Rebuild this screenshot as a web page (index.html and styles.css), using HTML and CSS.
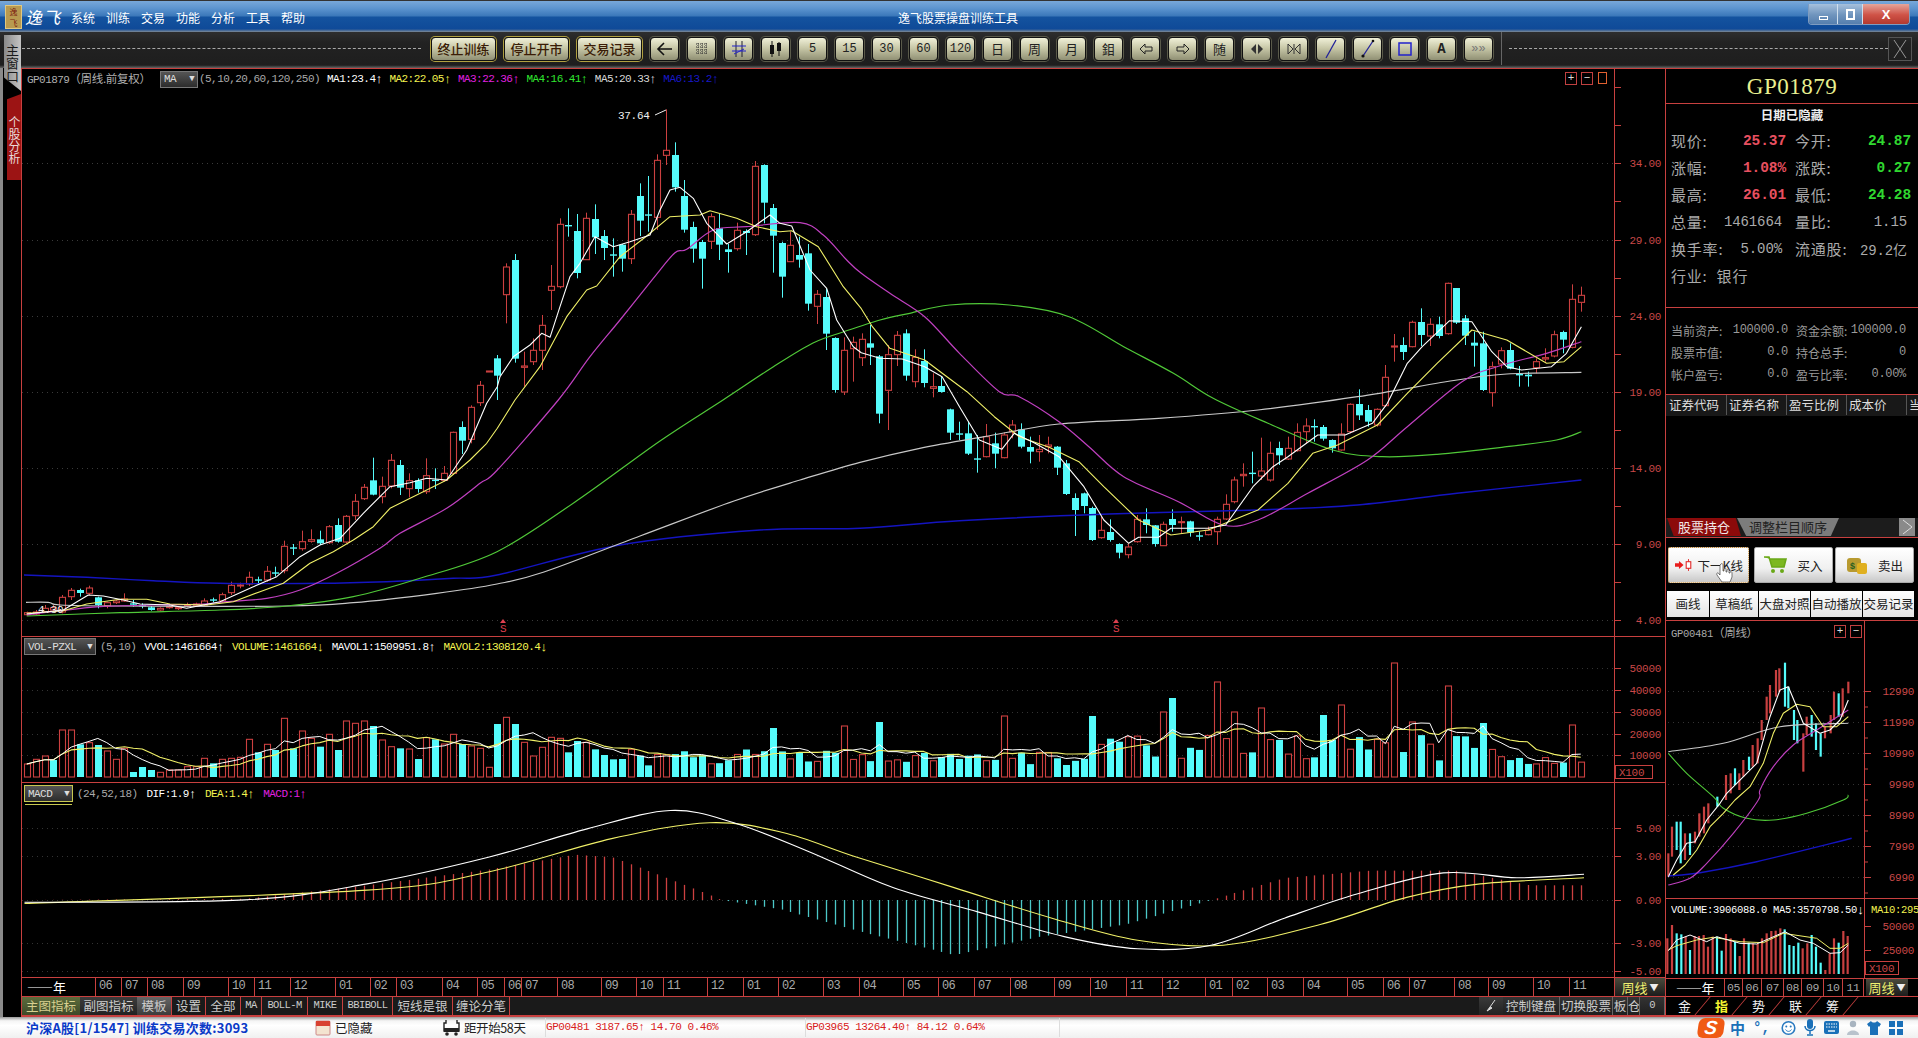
FILE: index.html
```html
<!DOCTYPE html>
<html lang="zh-CN">
<head>
<meta charset="utf-8">
<title>逸飞股票操盘训练工具</title>
<link rel="stylesheet" href="styles.css">
</head>
<body>
<div class="app">
  <header class="titlebar">
    <div class="brand">
      <span class="app-icon">逸飞</span>
      <span class="brand-name">逸飞</span>
    </div>
    <nav class="menu"><span>系统</span><span>训练</span><span>交易</span><span>功能</span><span>分析</span><span>工具</span><span>帮助</span></nav>
    <div class="app-title">逸飞股票操盘训练工具</div>
    <div class="win-btns">
      <span class="win-btn win-b1"><i class="win-min"></i></span>
      <span class="win-btn win-b2"><i class="win-max"></i></span>
      <span class="win-btn win-close">X</span>
    </div>
  </header>

  <div class="toolbar">
    <div class="grip grip-left"></div>
    <div class="tools-left">
      <button class="tb-text">终止训练</button>
      <button class="tb-text">停止开市</button>
      <button class="tb-text">交易记录</button>
    </div>
    <div class="tools-right">
      <button class="tb"><svg width="18" height="14" viewBox="0 0 18 14"><path d="M16 7H3M8 1 2 7l6 6" fill="none" stroke="#111" stroke-width="1.6"/></svg></button>
      <button class="tb"><svg width="14" height="14" viewBox="0 0 14 14"><path d="M1 2h12M1 5h12M1 8h12M1 11h12M3 1v12M7 1v12M11 1v12" fill="none" stroke="#333" stroke-dasharray="1 1"/></svg></button>
      <button class="tb"><svg width="16" height="18" viewBox="0 0 16 18"><path d="M5 1v16M11 1v16" stroke="#223" fill="none"/><path d="M1 6h14M1 11h14" stroke="#22c" fill="none"/><path d="M3 14 13 9" stroke="#22c" fill="none"/></svg></button>
      <button class="tb"><svg width="14" height="18" viewBox="0 0 14 18"><path d="M3 1v16M10 2v14" stroke="#111"/><rect x="1" y="5" width="4" height="9" fill="#111"/><rect x="8" y="3" width="4" height="8" fill="#111"/></svg></button>
      <button class="tb">5</button>
      <button class="tb">15</button>
      <button class="tb">30</button>
      <button class="tb">60</button>
      <button class="tb">120</button>
      <button class="tb tb-cn">日</button>
      <button class="tb tb-cn">周</button>
      <button class="tb tb-cn">月</button>
      <button class="tb tb-cn">鉬</button>
      <button class="tb"><svg width="14" height="12" viewBox="0 0 14 12"><path d="M6 1 1 6l5 5V8h7V4H6z" fill="none" stroke="#222"/></svg></button>
      <button class="tb"><svg width="14" height="12" viewBox="0 0 14 12"><path d="M8 1l5 5-5 5V8H1V4h7z" fill="none" stroke="#222"/></svg></button>
      <button class="tb tb-cn">随</button>
      <button class="tb"><svg width="14" height="12" viewBox="0 0 14 12"><path d="M6 1 1 6l5 5zM8 1l5 5-5 5z" fill="#333"/></svg></button>
      <button class="tb"><svg width="14" height="12" viewBox="0 0 14 12"><path d="M1 1l5 5-5 5zM13 1 8 6l5 5zM7 1v10" fill="none" stroke="#333"/></svg></button>
      <button class="tb"><svg width="16" height="20" viewBox="0 0 16 20"><path d="M13 1 3 19" stroke="#229" stroke-width="1.3"/></svg></button>
      <button class="tb"><svg width="16" height="20" viewBox="0 0 16 20"><path d="M13 2 3 17" stroke="#229" stroke-width="1.3"/><circle cx="3" cy="17" r="1.6" fill="#111"/><circle cx="13" cy="2" r="1.3" fill="#111"/></svg></button>
      <button class="tb"><svg width="16" height="16" viewBox="0 0 16 16"><rect x="2" y="2" width="12" height="12" fill="none" stroke="#22c" stroke-width="1.5"/></svg></button>
      <button class="tb tb-bold">A</button>
      <button class="tb tb-more">»»</button>
    </div>
    <div class="grip grip-right"></div>
    <div class="toolbar-close"><svg width="22" height="22" viewBox="0 0 22 22"><path d="M5 2l12 18M17 2 5 20" stroke="#999" fill="none"/></svg></div>
  </div>

  <div class="workspace">
    <aside class="leftstrip">
      <div class="tab-main">主窗口</div>
      <div class="tab-stock">个股分析</div>
    </aside>

    <main class="charts">
      <section class="pane pane-main">
        <svg id="chart-main" class="pane-svg" width="1644" height="568" viewBox="21 68 1644 568"></svg>
        <div class="legend legend-main">
          <span class="lg-name">GP01879<span class="cn">（周线.前复权）</span></span>
          <span class="dropdown dd-ma">MA<i>▼</i></span>
          <span class="lg-dim">(5,10,20,60,120,250)</span>
          <span class="c-white">MA1:23.4<i class="ar">↑</i></span>
          <span class="c-yellow">MA2:22.05<i class="ar">↑</i></span>
          <span class="c-magenta">MA3:22.36<i class="ar">↑</i></span>
          <span class="c-green">MA4:16.41<i class="ar">↑</i></span>
          <span class="c-grey">MA5:20.33<i class="ar">↑</i></span>
          <span class="c-blue">MA6:13.2<i class="ar">↑</i></span>
        </div>
        <div class="pane-ctrl"><b>+</b><b>−</b><b class="ctrl-win"></b></div>
      </section>
      <section class="pane pane-vol">
        <svg id="chart-vol" class="pane-svg" width="1644" height="146" viewBox="21 636 1644 146"></svg>
        <div class="legend legend-vol">
          <span class="dropdown dd-vol">VOL-PZXL<i>▼</i></span>
          <span class="lg-dim">(5,10)</span>
          <span class="c-white">VVOL:1461664<i class="ar">↑</i></span>
          <span class="c-yellow">VOLUME:1461664<i class="ar">↓</i></span>
          <span class="c-white">MAVOL1:1509951.8<i class="ar">↑</i></span>
          <span class="c-yellow">MAVOL2:1308120.4<i class="ar">↓</i></span>
        </div>
      </section>
      <section class="pane pane-macd">
        <svg id="chart-macd" class="pane-svg" width="1644" height="195" viewBox="21 782 1644 195"></svg>
        <div class="legend legend-macd">
          <span class="dropdown dd-macd">MACD<i>▼</i></span>
          <span class="lg-dim">(24,52,18)</span>
          <span class="c-white">DIF:1.9<i class="ar">↑</i></span>
          <span class="c-yellow">DEA:1.4<i class="ar">↑</i></span>
          <span class="c-magenta">MACD:1<i class="ar">↑</i></span>
        </div>
      </section>
      <div class="timeaxis">
        <div id="time-cells" class="time-cells"></div>
        <div class="period-btn">周线<i>▼</i></div>
      </div>
      <div class="bottomtabs">
        <span class="bt bt-active" style="width:58px">主图指标</span>
        <span class="bt bt-sub" style="width:57px">副图指标</span>
        <span class="bt bt-tpl" style="width:35px">模板</span>
        <span class="bt" style="width:34px">设置</span>
        <span class="bt" style="width:35px">全部</span>
        <span class="bt bt-en" style="width:21px">MA</span>
        <span class="bt bt-en" style="width:46px">BOLL-M</span>
        <span class="bt bt-en" style="width:35px">MIKE</span>
        <span class="bt bt-en" style="width:50px">BBIBOLL</span>
        <span class="bt" style="width:60px">短线是银</span>
        <span class="bt" style="width:57px">缠论分笔</span>
        <span class="bt-fill"></span>
        <span class="bt bt-pin"><svg width="14" height="14" viewBox="0 0 14 14"><path d="M11 1 6 8M3 12l3-4 2 1z" stroke="#ddd" fill="#ddd"/></svg></span>
        <span class="bt bt-plain" style="width:57px">控制键盘</span>
        <span class="bt bt-plain" style="width:53px">切换股票</span>
        <span class="bt bt-plain" style="width:15px">板</span>
        <span class="bt bt-plain" style="width:12px">仓</span>
        <span class="bt bt-plain bt-en" style="width:25px">0</span>
      </div>
    </main>

    <aside class="side">
      <div class="code">GP01879</div>
      <div class="quote">
        <div class="date-hidden">日期已隐藏</div>
        <div class="quote-grid">
          <div class="q"><span>现价:</span><b class="up">25.37</b></div>
          <div class="q"><span>今开:</span><b class="down">24.87</b></div>
          <div class="q"><span>涨幅:</span><b class="up">1.08%</b></div>
          <div class="q"><span>涨跌:</span><b class="down">0.27</b></div>
          <div class="q"><span>最高:</span><b class="up">26.01</b></div>
          <div class="q"><span>最低:</span><b class="down">24.28</b></div>
          <div class="q"><span>总量:</span><em>1461664</em></div>
          <div class="q"><span>量比:</span><em>1.15</em></div>
          <div class="q"><span>换手率:</span><em>5.00%</em></div>
          <div class="q"><span>流通股:</span><em>29.2亿</em></div>
          <div class="q q-start"><span>行业:</span><span>银行</span></div>
        </div>
      </div>
      <div class="account">
        <div class="a"><span>当前资产:</span><em>100000.0</em></div>
        <div class="a"><span>资金余额:</span><em>100000.0</em></div>
        <div class="a"><span>股票市值:</span><em>0.0</em></div>
        <div class="a"><span>持仓总手:</span><em>0</em></div>
        <div class="a"><span>帐户盈亏:</span><em>0.0</em></div>
        <div class="a"><span>盈亏比率:</span><em>0.00%</em></div>
      </div>
      <div class="table-head">
        <span>证券代码</span><span>证券名称</span><span>盈亏比例</span><span>成本价</span><span class="th-cut">当</span>
      </div>
      <div class="table-blank"></div>
      <div class="hold-tabs">
        <span class="ht ht-on">股票持仓</span>
        <span class="ht ht-off">调整栏目顺序</span>
        <span class="ht-fill"></span>
        <span class="ht-next"><svg width="15" height="16" viewBox="0 0 15 16"><path d="M3 1l9 7-9 7" fill="none" stroke="#ddd"/></svg></span>
      </div>
      <div class="actions">
        <button class="act act-next">
          <svg width="28" height="18" viewBox="0 0 28 18"><path d="M0 6.5h6V3l7 6-7 6v-3.5H0z" fill="#e81c1c"/><rect x="17" y="4" width="7" height="10" fill="#fff" stroke="#e02020" stroke-width="1.6"/><path d="M20.5 0v4M20.5 14v4" stroke="#e02020" stroke-width="1.4"/></svg>
          <span>下一K线</span>
          <svg class="hand" width="17" height="20" viewBox="0 0 17 20"><path d="M5 1c1-1 2 0 2 1v6h1V6c1-1 2-1 2 0v3h1V7c1-1 2-1 2 0v3h1V9c1-1 2 0 2 1v4l-2 5H6L1 12c-1-2 1-3 2-1l1 1V2z" fill="#fff" stroke="#444" stroke-width=".7"/></svg>
        </button>
        <button class="act act-gap">
          <svg width="24" height="18" viewBox="0 0 24 18"><path d="M0 1h5l3 10h12l2-8H6" fill="#7cb820" stroke="#6aa818" stroke-width="1.6"/><circle cx="9" cy="15" r="2" fill="#6aa818"/><circle cx="18" cy="15" r="2" fill="#6aa818"/></svg>
          <span>买入</span>
        </button>
        <button class="act">
          <svg width="22" height="20" viewBox="0 0 22 20"><rect x="1" y="3" width="14" height="14" rx="3" fill="#b89a30"/><rect x="11" y="8" width="10" height="11" rx="2" fill="#e0b020"/><text x="4" y="14" class="bag-s">$</text></svg>
          <span>卖出</span>
        </button>
      </div>
      <div class="tool-row">
        <span style="width:42px">画线</span>
        <span style="width:48px">草稿纸</span>
        <span style="width:51px">大盘对照</span>
        <span style="width:51px">自动播放</span>
        <span style="width:51px">交易记录</span>
      </div>
      <div class="mini">
        <svg id="chart-mini" class="pane-svg" width="252" height="357" viewBox="1666 621 252 357"></svg>
        <div class="mini-title">GP00481<span class="cn">（周线）</span></div>
        <div class="mini-ctrl"><b>+</b><b>−</b></div>
        <div class="mini-legend"><span class="c-white">VOLUME:3906088.0 MA5:3570798.50<i class="ar">↓</i></span><span class="c-yellow mini-ma10">MA10:295</span></div>
      </div>
      <div class="mini-time">
        <span class="mini-year" style="width:59px">——年</span>
        <span style="width:18px">05</span><span style="width:19px">06</span><span style="width:22px">07</span><span style="width:18px">08</span><span style="width:22px">09</span><span style="width:19px">10</span><span style="width:21px">11</span>
        <div class="period-btn mini-period">周线<i>▼</i></div>
      </div>
      <div class="mini-tabs">
        <span>金</span><span class="mt-on">指</span><span>势</span><span>联</span><span>筹</span>
      </div>
    </aside>
  </div>

  <footer class="statusbar">
    <div class="st-market">沪深A股[1/1547] 训练交易次数:3093</div>
    <div class="st-item st-date">
      <svg width="16" height="17" viewBox="0 0 16 17"><rect x="1" y="2" width="14" height="14" rx="1" fill="#f4e4d0" stroke="#c88"/><rect x="1" y="2" width="14" height="5" fill="#d84030"/></svg>
      <span>已隐藏</span>
    </div>
    <div class="st-item st-bus">
      <svg width="17" height="17" viewBox="0 0 17 17"><path d="M3 1v3H1v8h15V4h-2V1" fill="none" stroke="#222" stroke-width="1.4"/><rect x="1" y="9" width="15" height="4" fill="#222"/><circle cx="4" cy="15" r="1.8" fill="#222"/><circle cx="13" cy="15" r="1.8" fill="#222"/></svg>
      <span>距开始58天</span>
    </div>
    <div class="st-idx st-idx1">GP00481 3187.65↑ 14.70 0.46%</div>
    <div class="st-idx st-idx2">GP03965 13264.40↑ 84.12 0.64%</div>
    <div class="st-fill"></div>
    <div class="ime">
      <span class="ime-s">S</span>
      <span class="ime-zh">中</span>
      <span class="ime-p">°,</span>
      <svg width="15" height="16" viewBox="0 0 15 16"><circle cx="7.5" cy="8" r="6.3" fill="#fff" stroke="#2a7ac0" stroke-width="1.6"/><circle cx="5.3" cy="6.5" r="1" fill="#2a7ac0"/><circle cx="9.7" cy="6.5" r="1" fill="#2a7ac0"/><path d="M4.5 9.5c1.5 2.5 4.5 2.5 6 0" fill="none" stroke="#2a7ac0"/></svg>
      <svg width="12" height="17" viewBox="0 0 12 17"><rect x="3" y="0" width="6" height="10" rx="3" fill="#1a70b8"/><path d="M1 7c0 6 10 6 10 0M6 12v3M3 16h6" fill="none" stroke="#1a70b8" stroke-width="1.5"/></svg>
      <svg width="15" height="13" viewBox="0 0 15 13"><rect x="0" y="0" width="15" height="13" rx="2" fill="#1a70b8"/><path d="M2 3h11M2 6h11" stroke="#fff" stroke-dasharray="1.5 1"/><path d="M4 10h7" stroke="#fff" stroke-width="1.4"/></svg>
      <svg width="12" height="16" viewBox="0 0 12 16"><circle cx="6" cy="4" r="3.2" fill="#a8b4c0"/><path d="M0 15c0-6 12-6 12 0z" fill="#b8c2cc"/></svg>
      <svg width="14" height="14" viewBox="0 0 14 14"><path d="M4 0 0 3l2 3 1-1v9h8V5l1 1 2-3-4-3c-1 2-5 2-6 0z" fill="#1a70b8"/></svg>
      <svg width="14" height="14" viewBox="0 0 14 14"><rect width="6" height="6" fill="#1a70b8"/><rect x="8" width="6" height="6" fill="#1a70b8"/><rect y="8" width="6" height="6" fill="#1a70b8"/><rect x="8" y="8" width="6" height="6" fill="#1a70b8"/></svg>
    </div>
  </footer>
</div>
<script src="chart.js"></script>
</body>
</html>
```
FILE: styles.css
```css
* { box-sizing: border-box; }
html, body { margin: 0; padding: 0; background: #000; }
body {
  width: 1918px; height: 1038px; overflow: hidden;
  font-family: "Noto Sans CJK SC", "Liberation Sans", sans-serif;
  font-size: 12px; color: #bbb;
}
.app { width: 1918px; height: 1038px; display: flex; flex-direction: column; background: #000; }
button { font-family: inherit; padding: 0; cursor: default; }
em { font-style: normal; }

/* title bar */
.titlebar {
  height: 32px; flex: none; display: flex; align-items: center; padding: 3px 8px 2px 5px;
  border-top: 1px solid #333;
  background: linear-gradient(#78a8da 0, #5c94cf 24%, #3b78ba 48%, #14539f 52%, #0f4a98 90%, #7f8a96 100%);
  color: #fff; position: relative;
}
.brand { width: 66px; display: flex; align-items: center; gap: 3px; flex: none; }
.app-icon {
  width: 17px; height: 24px; background: #b89a50; color: #7a1a10; font-size: 8px; line-height: 11px;
  text-align: center; border: 1px solid #e0c880; overflow: hidden;
}
.brand-name { font-family: "Noto Sans CJK JP", sans-serif; font-size: 17px; font-style: italic; line-height: 24px; letter-spacing: 1px; }
.menu { display: flex; gap: 11px; font-size: 12px; }
.menu span { width: 24px; text-align: center; }
.app-title { position: absolute; left: 898px; top: 8px; font-size: 12px; line-height: 17px; }
.win-btns { margin-left: auto; display: flex; height: 21px; border-radius: 0 0 4px 4px; overflow: hidden; margin-top: -5px; border: 1px solid #7f9cc0; border-top: 0; }
.win-btn {
  display: flex; align-items: center; justify-content: center;
  background: linear-gradient(#a6c0dc, #6f94bd 55%, #567fae); border-left: 1px solid #cfdfee;
}
.win-b1 { width: 28px; border-left: 0; }
.win-b2 { width: 25px; }
.win-close { width: 47px; background: linear-gradient(#e6a59a, #cf5246 55%, #b33a30); color: #fff; font-family: "Liberation Sans", sans-serif; font-weight: bold; font-size: 13px; }
.win-min { width: 9px; height: 4px; border: 1px solid #fff; margin-top: 7px; }
.win-max { width: 9px; height: 11px; border: 2px solid #fff; }

/* toolbar */
.toolbar {
  height: 36px; flex: none; display: flex; align-items: center;
  background: linear-gradient(#2e2e2e, #222 30%, #1e1e1e 92%, #666 100%);
  padding-left: 22px; padding-bottom: 3px;
}
.grip { height: 1px; border-top: 1px dashed #a8a8a8; align-self: center; }
.grip-left { width: 399px; margin-right: 10px; }
.grip-right { width: 379px; margin-left: 7px; }
.tools-left { display: flex; gap: 8px; }
.tools-right { display: flex; gap: 8px; margin-left: 8px; border-right: 1px solid #666; padding-right: 8px; height: 33px; align-items: center; }
.tb, .tb-text {
  height: 24px; border: 1px solid #111; border-radius: 4px; color: #222; display: flex; align-items: center; justify-content: center;
  background: linear-gradient(#f0f0d8, #c8c8a8 45%, #909074);
  box-shadow: 0 0 0 1px #5a5a4a; font-size: 13px;
}
.tb { width: 29px; font-family: "Liberation Mono", monospace; font-size: 12px; }
.tb-text { width: 65px; color: #3a1c06; font-size: 13px; font-weight: 500; box-shadow: 0 0 0 1px #b0a040; }
.tb-cn { font-family: "Noto Sans CJK SC", sans-serif; font-size: 13px; }
.tb-bold { font-weight: bold; font-size: 14px; }
.tb-more { color: #777; font-size: 12px; }
.toolbar-close { width: 24px; height: 24px; border: 1px solid #555; }

/* work area */
.workspace { height: 949px; flex: none; display: flex; }
.leftstrip { width: 21px; flex: none; background: #000; border-left: 3px solid #8a8a8a; position: relative; }
.tab-main {
  position: absolute; left: 1px; top: -33px; width: 17px; height: 56px; background: linear-gradient(90deg, #8a8a8a, #c4c4c4);
  color: #1a1a1a; writing-mode: vertical-rl; text-orientation: upright; font-size: 13px; line-height: 17px; text-align: center;
  clip-path: polygon(0 0, 100% 0, 100% 100%, 0 76%);
}
.tab-stock {
  position: absolute; left: 4px; top: 26px; width: 14px; height: 86px; background: #9c1414; color: #e8d8d8;
  writing-mode: vertical-rl; text-orientation: upright; font-size: 12px; line-height: 14px; text-align: center; padding-top: 5px;
  clip-path: polygon(0 6%, 100% 0, 100% 100%, 0 100%);
}
.charts { width: 1644px; flex: none; display: flex; flex-direction: column; }
.pane { position: relative; flex: none; }
.pane-main { height: 568px; }
.pane-vol { height: 146px; }
.pane-macd { height: 195px; }
.pane-svg { display: block; }
.legend {
  position: absolute; left: 6px; display: flex; align-items: center; gap: 7px;
  font-family: "Liberation Mono", "Noto Sans CJK SC", monospace; font-size: 11px; letter-spacing: -.55px; line-height: 16px; white-space: nowrap;
}
.legend-main { top: 2px; }
.legend-vol { top: 2px; left: 3px; gap: 8px; }
.legend-macd { top: 3px; left: 3px; gap: 9px; }
.lg-name { color: #b0b0b0; width: 126px; }
.cn { font-family: "Noto Sans CJK SC", sans-serif; font-size: 11.5px; letter-spacing: -.3px; }
.lg-dim { color: #aaa; }
.ar { display: inline-block; width: 7px; font: 13px/14px "Liberation Sans", sans-serif; letter-spacing: 0; text-align: center; vertical-align: -1px; }
.c-white { color: #fff; }
.c-yellow { color: #f4f450; }
.c-magenta { color: #e020e0; }
.c-green { color: #30e830; }
.c-grey { color: #d8d8d8; }
.c-blue { color: #1818c8; }
.dropdown {
  display: flex; align-items: center; justify-content: space-between; height: 17px; padding: 0 3px;
  background: linear-gradient(#555, #2c2c2c); border: 1px solid #777; color: #ddd;
}
.dropdown i { font-style: normal; font-size: 9px; }
.dd-ma { width: 38px; margin-right: -6px; }
.dd-vol { width: 72px; margin-right: -4px; }
.dd-macd { width: 49px; border-color: #c8c850; box-shadow: 0 3px 0 -1px #000, 0 4px 0 -1px #c8c850; margin-right: -5px; }
.pane-ctrl { position: absolute; top: 4px; left: 1544px; display: flex; gap: 4px; }
.pane-ctrl b, .mini-ctrl b {
  width: 12px; height: 13px; border: 1px solid #c04040; color: #ddd; font: 11px/11px "Liberation Mono", monospace; text-align: center;
}
.ctrl-win { width: 9px !important; height: 12px !important; border-color: #e06030 !important; margin-left: 1px; }

.timeaxis { height: 20px; flex: none; display: flex; border-top: 1px solid #c8403f; border-bottom: 1px solid #c8403f; border-left: 1px solid #c8403f; }
.time-cells { width: 1592px; display: flex; overflow: hidden; }
.time-cell {
  flex: none; border-left: 1px solid #c8403f; padding-left: 3px; color: #aaa;
  font-family: "Liberation Mono", monospace; font-size: 12px; letter-spacing: -.6px; line-height: 17px; white-space: nowrap;
}
.time-year { border-left: 0; padding-left: 5px; color: #fff; font-family: "Noto Sans CJK SC", sans-serif; font-size: 13px; letter-spacing: 0; }
.period-btn {
  width: 51px; height: 18px; display: flex; align-items: center; justify-content: center; gap: 2px; color: #f0f070; font-size: 13px; line-height: 17px;
  background: linear-gradient(#4a4a3c, #1c1c1c); border-left: 1px solid #c8403f; white-space: nowrap;
}
.period-btn i { font-style: normal; font-size: 9px; color: #eee; }

.bottomtabs { height: 20px; flex: none; display: flex; border-left: 1px solid #c8403f; border-bottom: 2px solid #c8403f; background: #1a1a1a; }
.bt {
  flex: none; border-right: 1px solid #c8403f; text-align: center; color: #ccc; font-size: 12.5px; line-height: 17px; letter-spacing: 0; white-space: nowrap; overflow: hidden;
}
.bt-en { font-family: "Liberation Mono", monospace; font-size: 10.5px; letter-spacing: -.6px; }
.bt-active { background: linear-gradient(#5c6c3c, #3e4a28); border-right: 0; color: #d8d090; }
.bt-sub { background: linear-gradient(#3c3c3c, #222); border-right: 0; }
.bt-tpl { background: linear-gradient(#666, #3c3c3c); }
.bt-fill { flex: 1; }
.bt-pin { width: 24px; background: linear-gradient(#3a3a3a, #222); border-right: 0; display: flex; align-items: center; justify-content: center; }
.bt-plain { background: linear-gradient(#333, #1f1f1f); border-right: 1px solid #666; }

/* side panel */
.side { width: 253px; flex: none; display: flex; flex-direction: column; border-left: 1px solid #c8403f; background: #000; }
.code { height: 36px; flex: none; border-top: 1px solid #c8403f; border-bottom: 1px solid #c8403f; text-align: center; color: #e8f090; font: 23px/35px "Liberation Serif", serif; letter-spacing: .5px; }
.quote { height: 204px; flex: none; border-bottom: 1px solid #c8403f; padding-left: 5px; }
.date-hidden { height: 23px; line-height: 22px; text-align: center; color: #eee; font-weight: 700; font-size: 12.5px; padding-right: 5px; }
.quote-grid { display: grid; grid-template-columns: 115px 116px; column-gap: 9px; grid-auto-rows: 27px; }
.q { display: flex; justify-content: space-between; align-items: center; font-size: 15px; letter-spacing: .8px; color: #aaa; white-space: nowrap; }
.q b, .q em { font-family: "Liberation Mono", monospace; font-size: 14.5px; letter-spacing: -.1px; }
.q em { color: #aaa; font-size: 14px; letter-spacing: -.1px; margin-right: 4px; }
.q-start { justify-content: flex-start; gap: 9px; }
.up { color: #e85060; }
.down { color: #30d830; }
.account { height: 87px; flex: none; border-bottom: 1px solid #c8403f; padding: 11px 8px 0 5px; display: grid; grid-template-columns: 117px 110px; column-gap: 8px; grid-auto-rows: 22px; }
.a { display: flex; justify-content: space-between; align-items: center; font-size: 12px; color: #9a9a9a; white-space: nowrap; }
.a em { font-family: "Liberation Mono", monospace; font-size: 12px; letter-spacing: -.3px; }
.table-head { height: 21px; flex: none; display: flex; background: #181818; color: #ddd; font-size: 12.5px; line-height: 20px; white-space: nowrap; overflow: hidden; padding-left: 1px; }
.table-head span { width: 60px; flex: none; padding-left: 2px; border-right: 1px solid #555; height: 20px; }
.table-head .th-cut { border: 0; }
.table-blank { height: 102px; flex: none; }
.hold-tabs { height: 20px; flex: none; display: flex; border-bottom: 1px solid #c8403f; background: #1c1c1c; padding-left: 1px; }
.ht { flex: none; height: 18px; line-height: 18px; text-align: center; font-size: 13px; white-space: nowrap; }
.ht-on { width: 74px; background: #8c0a0a; color: #f0e8e8; clip-path: polygon(0 0, 93% 0, 100% 100%, 9% 100%); }
.ht-off { width: 102px; margin-left: -4px; background: #7c7c7c; color: #222; clip-path: polygon(0 0, 100% 0, 92% 100%, 9% 100%); }
.ht-fill { flex: 1; }
.ht-next { width: 16px; height: 18px; background: #8a8a8a; margin-right: 3px; display: flex; align-items: center; justify-content: center; }
.actions { height: 53px; flex: none; padding: 9px 0 0 2px; display: flex; gap: 2px; }
.act {
  width: 79px; height: 36px; display: flex; align-items: center; justify-content: space-around; padding: 0 5px;
  background: linear-gradient(#fff, #f0f0f0 60%, #c8c8c8); border: 1px solid #aaa; border-radius: 2px; color: #222; font-size: 12.5px; position: relative; white-space: nowrap;
}
.act-next { width: 81px; border: 1px dotted #c88a30; margin-right: 3px; justify-content: flex-start; gap: 4px; padding-left: 6px; }
.act-gap { margin-right: 0; }
.hand { position: absolute; left: 47px; top: 15px; }
.bag-s { font: bold 9px "Liberation Sans", sans-serif; fill: #286020; }
.tool-row { height: 30px; flex: none; display: flex; gap: 1px; padding-left: 1px; border-bottom: 1px solid #c8403f; }
.tool-row span { height: 26px; flex: none; background: linear-gradient(#fff, #e4e4e4); color: #222; text-align: center; line-height: 25px; font-size: 12.5px; white-space: nowrap; overflow: hidden; }
.mini { height: 357px; flex: none; position: relative; }
.mini-title { position: absolute; left: 5px; top: 3px; color: #aaa; font: 10.5px/16px "Liberation Mono", monospace; letter-spacing: -.3px; }
.mini-ctrl { position: absolute; left: 168px; top: 4px; display: flex; gap: 4px; }
.mini-legend { position: absolute; left: 5px; top: 281px; width: 247px; overflow: hidden; white-space: nowrap; font: 10.5px/16px "Liberation Mono", monospace; letter-spacing: -.3px; }
.mini-ma10 { margin-left: 7px; }
.mini-time { height: 19px; flex: none; display: flex; border-top: 1px solid #c8403f; border-bottom: 1px solid #c8403f; position: relative; }
.mini-time > span { flex: none; border-right: 1px solid #c8403f; color: #aaa; font: 11.5px/17px "Liberation Mono", monospace; text-align: center; letter-spacing: -.4px; }
.mini-year { font: 13px/17px "Noto Sans CJK SC", sans-serif !important; color: #fff !important; }
.mini-period { width: 42px; margin-left: 2px; height: 17px; border-left: 0; }
.mini-tabs { height: 20px; flex: none; display: flex; border-bottom: 2px solid #c8403f; }
.mini-tabs span { width: 37px; flex: none; text-align: center; color: #eee; font-size: 13px; line-height: 17px; position: relative; }
.mini-tabs span::after { content: ""; position: absolute; right: 0; top: 0; bottom: 0; border-right: 1px solid #c8403f; transform: skewX(-40deg); }
.mini-tabs .mt-on { color: #f4f430; font-weight: 700; }

/* status bar */
.statusbar {
  height: 21px; flex: none; display: flex; align-items: center; padding-left: 26px;
  background: linear-gradient(#9a9a9a 0, #f4f4f4 18%, #fff 40%, #f0f0f0 100%); font-size: 12.5px; white-space: nowrap;
}
.st-market { width: 289px; color: #0a3ac8; font-weight: 700; font-size: 13px; letter-spacing: .25px; }
.st-item { display: flex; align-items: center; gap: 4px; color: #222; }
.st-date { width: 128px; }
.st-bus { width: 102px; letter-spacing: -.4px; }
.st-idx { color: #d82020; font-family: "Liberation Mono", monospace; font-size: 11px; letter-spacing: -.45px; border-left: 1px solid #ddd; height: 19px; line-height: 19px; }
.st-idx1 { width: 260px; }
.st-idx2 { width: 255px; border-right: 1px solid #ddd; }
.st-fill { flex: 1; }
.ime { display: flex; align-items: center; gap: 8px; padding-right: 15px; height: 21px; }
.ime-s { width: 26px; height: 20px; border-radius: 6px; background: #f05a14; color: #fff; font: italic bold 19px/20px "Liberation Sans", sans-serif; text-align: center; transform: skewX(-8deg); margin-right: -2px; }
.ime-zh { color: #1a70b8; font-size: 15px; font-weight: 700; line-height: 20px; }
.ime-p { color: #1a70b8; font: bold 14px/16px "Liberation Mono", monospace; width: 20px; }
```
FILE: chart.js
```js
(function () {
  var RED = '#cc4040', CYAN = '#55fbfb', LINE = '#c8403f';
  var X0 = 26.8, STEP = 8.88;
  function xi(i) { return X0 + STEP * i; }

  // candles: [up, bodyTop, bodyBottom, high, low], read in three crops of the chart
  var c11 = [[1,938,944,935,946],[1,936,942,930,944],[1,925,935,915,938],[1,923,930,915,934],[1,892,936,885,940],[1,871,890,864,900],[0,870,879,866,890],[1,864,880,857,885],[0,892,915,890,925],[1,908,917,905,925],[1,903,908,900,912],[1,897,903,880,905],[0,910,912,900,920],[0,915,918,910,925],[0,922,930,918,932],[1,925,930,922,932],[1,920,921,914,926],[1,923,925,918,930],[1,915,918,908,922],[1,912,916,908,920],[1,903,915,895,918],[0,898,902,893,907],[1,884,903,878,908],[1,856,878,845,885],[1,855,857,848,865],[1,832,852,815,858],[0,838,840,830,850],[1,814,840,798,845],[0,817,819,800,830],[1,739,812,722,820],[0,742,744,732,765],[1,725,746,692,752],[1,719,724,688,728],[0,718,730,692,735],[1,680,728,675,732],[0,675,725,655,728],[1,649,726,645,730],[1,604,647,582,660],[1,562,596,552,600],[0,541,584,473,586],[1,559,590,530,610],[1,481,558,462,565],[0,495,563,480,585],[1,542,566,520,592],[0,541,567,535,578],[1,527,575,475,582],[0,539,541,505,567],[1,520,541,498,545],[1,397,520,395,525],[0,381,422,364,462],[1,322,418,316,430],[1,256,308,243,318],[1,213,215,213,215]];
  var c9 = [[0,775,827,765,900],[1,501,584,490,670],[0,480,776,462,788],[1,798,802,755,860],[1,751,785,715,795],[1,676,751,645,810],[1,559,571,495,630],[1,373,560,355,565],[0,375,377,325,410],[0,393,519,342,535],[1,355,479,338,480],[0,357,412,313,462],[0,408,444,390,480],[0,463,467,415,530],[0,434,476,432,515],[1,343,476,330,492],[0,288,362,250,408],[0,343,347,228,395],[1,181,352,163,390],[1,151,166,28,195],[0,165,262,127,275],[0,288,389,240,398],[0,381,446,365,488],[0,426,476,420,566],[1,350,424,340,447],[0,385,434,342,480],[0,448,456,432,518],[1,391,446,368,452],[0,393,399,388,465],[1,199,404,183,408],[0,195,308,193,370],[0,324,407,312,518],[0,429,530,425,593],[1,436,485,395,486],[0,465,479,410,503],[0,460,611,432,632],[1,583,619,570,672],[0,591,701,565,750],[0,714,870,712,878],[1,751,876,712,885],[1,727,746,710,845]];
  var c12 = [[1,238,293,220,318],[0,250,263,195,315],[0,289,461,285,490],[1,284,391,255,510],[1,226,284,213,318],[0,220,347,208,362],[1,292,365,268,382],[0,303,369,268,382],[1,380,385,340,412],[0,378,396,350,398],[0,448,518,446,540],[0,520,523,485,540],[0,520,581,485,585],[0,595,597,525,638],[1,530,590,492,592],[0,550,581,518,625],[1,525,593,517,595],[1,495,515,480,535],[0,508,560,490,565],[0,561,575,530,610],[1,568,575,525,605],[1,555,560,530,580],[0,560,623,558,645],[0,610,702,600,705],[0,714,750,700,828],[0,700,738,698,760],[0,744,840,740,843],[1,811,833,770,836],[0,816,840,778,845],[0,852,878,850,895],[1,861,884,850,895],[1,778,845,765,848],[0,778,795,745,820],[0,796,852,795,860],[1,793,857,785,858],[0,777,795,748,815],[1,785,788,770,820],[0,784,818,782,830],[0,826,829,815,842],[1,811,824,800,826],[1,778,815,770,855],[1,733,777,703,780],[1,660,725,650,730],[1,643,647,610,680],[0,638,640,575,670],[1,633,648,533,660],[1,580,660,545,665],[0,564,586,545,615],[1,565,597,530,600],[1,517,572,490,575],[1,498,515,475,550],[0,498,502,478,545],[0,501,536,495,542],[0,540,565,538,578],[1,522,570,490,572],[1,433,515,430,520],[0,432,466,388,480],[0,450,485,435,500],[1,448,495,445,500],[1,352,437,315,440],[1,258,260,222,305],[0,255,276,232,300],[1,187,260,182,262],[0,186,225,145,258],[1,193,228,175,258],[0,193,228,170,235],[1,70,221,68,224],[0,84,188,84,192],[0,175,227,165,255],[0,248,257,215,320],[0,250,390,215,393],[1,320,398,305,440],[1,272,312,262,325],[0,270,326,250,328],[0,342,344,318,380],[0,344,349,335,380],[1,305,323,295,340],[1,293,297,265,305],[1,224,288,212,292],[0,216,239,212,280],[1,118,262,73,265],[1,106,127,80,155]];
  function conv(arr, base) {
    return arr.map(function (c) { return [c[0], base + c[1] / 3, base + c[2] / 3, base + c[3] / 3, base + c[4] / 3]; });
  }
  var candles = conv(c11, 300).concat(conv(c9, 100)).concat(conv(c12, 260));
  function hollow(x, y1, y2, w) {
    return '<rect x="' + (x - w / 2 + .5) + '" y="' + y1 + '" width="' + (w - 1) + '" height="' + Math.max(y2 - y1, 1) + '" fill="#000" stroke="' + RED + '" stroke-width="1.1"/>';
  }
  function fill(x, y1, y2, w, col) {
    return '<rect x="' + (x - w / 2) + '" y="' + y1 + '" width="' + w + '" height="' + Math.max(y2 - y1, 1.4) + '" fill="' + col + '"/>';
  }
  function vline(x, y1, y2, col, w) {
    return '<line x1="' + x + '" x2="' + x + '" y1="' + y1 + '" y2="' + y2 + '" stroke="' + col + '" stroke-width="' + (w || 1) + '"/>';
  }
  function hline(x1, x2, y, col, extra) {
    return '<line x1="' + x1 + '" x2="' + x2 + '" y1="' + y + '" y2="' + y + '" stroke="' + col + '" ' + (extra || '') + '/>';
  }
  function poly(p, col, w) {
    return '<polyline fill="none" stroke="' + col + '" stroke-width="' + (w || 1.2) + '" stroke-linejoin="round" points="' + p.map(function (q) { return q[0].toFixed(1) + ',' + q[1].toFixed(1); }).join(' ') + '"/>';
  }
  // Catmull-Rom through the read points, for the slow-moving curves
  function smooth(p, col, w) {
    var d = 'M' + p[0][0].toFixed(1) + ' ' + p[0][1].toFixed(1);
    for (var i = 0; i < p.length - 1; i++) {
      var a = p[Math.max(0, i - 1)], b = p[i], c = p[i + 1], e = p[Math.min(p.length - 1, i + 2)];
      d += 'C' + (b[0] + (c[0] - a[0]) / 6).toFixed(1) + ' ' + (b[1] + (c[1] - a[1]) / 6).toFixed(1) + ' ' +
        (c[0] - (e[0] - b[0]) / 6).toFixed(1) + ' ' + (c[1] - (e[1] - b[1]) / 6).toFixed(1) + ' ' + c[0].toFixed(1) + ' ' + c[1].toFixed(1);
    }
    return '<path fill="none" stroke="' + col + '" stroke-width="' + (w || 1.2) + '" d="' + d + '"/>';
  }
  function text(x, y, s, anchor, col) {
    return '<text x="' + x + '" y="' + y + '" text-anchor="' + (anchor || 'start') + '" font-family="Liberation Mono, monospace" font-size="11" letter-spacing="-.3" fill="' + (col || '#c84848') + '">' + s + '</text>';
  }
  function pts(ox, oy, sx, sy, a) {
    var out = [];
    for (var i = 0; i < a.length; i += 2) out.push([ox + a[i] / sx, oy + a[i + 1] / sy]);
    return out;
  }
  function join(z11, z9, z12) {
    var a = pts(20, 300, 3, 3, z11).filter(function (p) { return p[0] < 497; });
    var b = pts(480, 100, 3, 3, z9).filter(function (p) { return p[0] >= 497 && p[0] < 862; });
    var c = pts(860, 260, 2.01, 3, z12).filter(function (p) { return p[0] >= 862; });
    return a.concat(b).concat(c);
  }

  var ma1 = join([20,942,130,930,205,885,250,888,310,900,360,912,450,915,500,925,600,905,700,860,770,830,840,770,900,735,960,715,1030,640,1110,560,1170,548,1220,535,1280,540,1340,450,1400,310,1431,257],
    [52,860,60,830,100,770,150,735,185,700,210,712,240,620,270,530,300,490,345,410,400,440,450,425,510,405,540,330,570,270,600,262,640,295,680,370,740,432,800,395,870,345,900,370,935,378,990,510,1040,565,1070,660,1120,740,1144,758],
    [0,270,40,295,85,297,130,320,165,350,200,440,240,540,285,568,310,520,350,548,400,590,450,680,490,780,540,850,560,832,600,832,625,805,700,805,735,795,790,680,830,620,860,590,920,525,975,525,1030,490,1060,430,1100,310,1130,260,1185,182,1230,185,1270,275,1300,320,1330,330,1390,320,1420,280,1450,200]);
  var ma2 = join([20,940,130,932,200,912,300,898,380,898,450,912,560,915,640,905,720,875,790,850,870,790,940,755,1000,720,1060,680,1110,625,1190,585,1280,540,1350,480,1400,430,1431,385],
    [52,985,105,900,180,800,260,650,320,570,350,558,420,470,500,408,570,350,660,345,690,332,770,355,830,380,900,395,935,392,1015,440,1090,560,1144,626],
    [0,155,25,200,60,265,130,300,170,345,215,395,270,470,320,530,380,562,440,605,490,680,560,780,625,825,700,810,800,750,860,670,910,580,960,555,1040,495,1100,400,1160,310,1230,210,1300,240,1380,310,1415,305,1450,260]);
  var ma3 = join([20,945,100,935,240,920,400,915,550,912,620,905,740,895,840,870,950,820,1080,745,1140,700,1280,625,1380,550,1431,495],
    [52,1110,235,900,330,770,420,660,520,535,585,458,620,448,700,390,800,380,960,368,1030,405,1100,480,1144,520],
    [0,30,60,100,130,170,200,280,280,395,320,410,400,485,460,560,530,650,640,725,730,795,800,780,900,700,1020,600,1100,500,1210,365,1280,320,1380,280,1450,245]);
  var ma4 = pts(20, 300, 3, 3, [20,948,300,938,600,930,800,918,1000,890,1200,835,1431,755]).concat([[575,502],[660,441],[723,400],[773,367],[813,343],[843,332],[880,320]]).concat(pts(860, 260, 2.01, 3, [100,160,180,135,300,135,420,170,530,260,630,340,710,415,820,490,950,570,1050,590,1160,583,1300,560,1400,540,1450,515]));
  var ma5 = pts(20, 300, 3, 3, [18,907,85,907,120,915,300,918,800,918,1000,908,1250,880,1431,852]).concat([[544,572],[640,536],[734,501],[800,480]]).concat(pts(860, 260, 2.01, 3, [0,607,120,565,250,530,400,492,600,475,800,450,1000,410,1200,360,1300,342,1450,337]));
  var ma6 = pts(20, 300, 3, 3, [12,825,200,832,400,842,600,850,900,850,1100,845,1300,835,1431,825]).concat([[620,545],[760,530]]).concat(pts(860, 260, 2.01, 3, [0,805,200,782,500,762,800,750,1000,735,1200,700,1450,660]));

  // ---------- main pane
  var s = [];
  [[163, '34.00'], [240, '29.00'], [316, '24.00'], [392, '19.00'], [468, '14.00'], [544, '9.00'], [620, '4.00']].forEach(function (l) {
    s.push(hline(22, 1614, l[0] + .5, '#3a3a3a', 'stroke-dasharray="1 4"'));
    s.push(hline(1614, 1621, l[0] + .5, LINE));
    s.push(hline(1614, 1621, l[0] + 38.5, LINE));
    s.push(text(1661, l[0] + 4, l[1], 'end'));
  });
  s.push(hline(1614, 1621, 125.5, LINE));
  s.push(hline(1614, 1621, 87.5, LINE));
  candles.forEach(function (c, i) {
    var x = Math.round(xi(i)) + .5;
    if (c[0]) {
      s.push(vline(x, c[3], c[1], RED));
      s.push(vline(x, c[2], c[4], RED));
      s.push(hollow(x, c[1], c[2], 7));
    } else {
      s.push(vline(x, c[3], c[4], CYAN));
      s.push(fill(x, c[1], c[2], 7, CYAN));
    }
  });
  s.push(smooth(ma6, '#1414c0', 1.4));
  s.push(smooth(ma5, '#c8c8c8', 1.2));
  s.push(smooth(ma4, '#50c838', 1.2));
  s.push(smooth(ma3, '#c040c0', 1.2));
  s.push(poly(ma2, '#f0f068', 1.1));
  s.push(poly(ma1, '#ffffff', 1.1));
  s.push(text(618, 119, '37.64', 'start', '#eee'));
  s.push(poly([[655, 115], [666, 110]], '#eee', 1));
  s.push(text(38, 613, '4.30', 'start', '#eee'));
  [503, 1116].forEach(function (x) {
    s.push('<polygon points="' + x + ',619 ' + (x - 3) + ',623 ' + (x + 3) + ',623" fill="#e04050"/>');
    s.push(text(x - 3, 632, 'S', 'start', '#e04050'));
  });
  s.push(hline(21, 1665, 68.5, LINE));
  s.push(vline(21.5, 68, 636, LINE));
  s.push(vline(1614.5, 68, 636, LINE));
  document.getElementById('chart-main').innerHTML = s.join('');

  // ---------- volume pane
  var tops = [432,418,408,420,330,330,373,368,375,393,418,385,456,441,450,457,450,450,440,440,415,430,418,415,412,358,397,373,390,295,385,333,355,380,343,390,303,310,303,318,360,380,385,387,417,353,358,372,343,372,378,385,442,312,292,312,367,408,382,352,355,397,363,367,388,405,418,417,388,407].map(function (v) { return 620 + v / 3; });
  var seed = 4711;
  function rnd() { seed = (seed * 16807) % 2147483647; return seed / 2147483647; }
  var peaks = {129: 698, 134: 682, 136: 712, 139: 708, 146: 715, 148: 705, 154: 663, 156: 722, 160: 686, 164: 723, 174: 725, 128: 712, 120: 716, 110: 716, 96: 722, 92: 726, 84: 728};
  var vols = candles.map(function (c, i) {
    if (i < tops.length) return tops[i];
    if (peaks[i]) return peaks[i];
    var env = i < 120 ? 20 : i < 166 ? 30 : 16;
    return 777 - env * (.55 + .85 * rnd());
  });
  s = [];
  [[668, '50000'], [690, '40000'], [712, '30000'], [734, '20000'], [755, '10000']].forEach(function (l) {
    s.push(hline(22, 1614, l[0] + .5, '#333', 'stroke-dasharray="1 4"'));
    s.push(hline(1614, 1621, l[0] + .5, LINE));
    s.push(text(1661, l[0] + 4, l[1], 'end'));
  });
  vols.forEach(function (t, i) {
    var x = Math.round(xi(i)) + .5, up = candles[i][0] && i !== 3;
    if (up) s.push(hollow(x, t, 777, 7));
    else s.push(fill(x, t, 777, 7, CYAN));
  });
  function mavol(n) {
    return vols.map(function (t, i) {
      var a = Math.max(0, i - n + 1), sum = 0;
      for (var k = a; k <= i; k++) sum += 777 - vols[k];
      return [xi(i), 777 - sum / (i - a + 1)];
    });
  }
  s.push(poly(mavol(10), '#f0f068', 1.1));
  s.push(poly(mavol(5), '#ffffff', 1));
  s.push('<rect x="1615.5" y="765.5" width="37" height="13" fill="none" stroke="' + LINE + '"/>');
  s.push(text(1619, 776, 'X100'));
  s.push(hline(21, 1665, 636.5, LINE));
  s.push(vline(21.5, 636, 782, LINE));
  s.push(vline(1614.5, 636, 782, LINE));
  document.getElementById('chart-vol').innerHTML = s.join('');

  // ---------- MACD pane
  function sp(a) { var o = []; for (var i = 0; i < a.length; i += 2) o.push([a[i] * 1.2232, a[i + 1] * 1.2243]); return o; }
  var dif = sp([20,737,200,735,300,722,400,700,480,677,548,662,600,672,660,695,730,725,800,745,870,765,930,775,990,772,1050,750,1110,730,1180,713,1240,717,1295,714]);
  var dea = sp([20,738,300,727,400,712,500,685,580,672,640,680,700,700,780,725,860,750,930,768,1000,772,1080,755,1150,733,1210,722,1295,717]);
  var hist = [20,0,200,1,300,12,400,25,470,37,500,35,540,20,590,0,640,-8,700,-25,780,-45,850,-30,920,-20,990,0,1050,18,1120,24,1190,24,1250,12,1295,12];
  function histAt(px) {
    var p = px / 1.2232;
    for (var i = 0; i < hist.length - 2; i += 2) {
      if (p <= hist[i + 2]) {
        var t = (p - hist[i]) / (hist[i + 2] - hist[i]);
        return (hist[i + 1] + t * (hist[i + 3] - hist[i + 1])) * 1.2243;
      }
    }
    return 12;
  }
  s = [];
  [[828, '5.00'], [856, '3.00'], [900, '0.00'], [943, '-3.00'], [971, '-5.00']].forEach(function (l) {
    s.push(hline(22, 1614, l[0] + .5, '#333', 'stroke-dasharray="1 4"'));
    s.push(hline(1614, 1621, l[0] + .5, LINE));
    s.push(text(1661, l[0] + 4, l[1], 'end'));
  });
  candles.forEach(function (c, i) {
    var x = Math.round(xi(i)) + .5, h = histAt(xi(i));
    s.push(vline(x, 900, 900 - h, h >= 0 ? RED : '#4cc8c8', 1.3));
  });
  s.push(smooth(dea, '#f0f068', 1.1));
  s.push(smooth(dif, '#ffffff', 1.1));
  s.push(hline(21, 1665, 782.5, LINE));
  s.push(vline(21.5, 782, 977, LINE));
  s.push(vline(1614.5, 782, 977, LINE));
  document.getElementById('chart-macd').innerHTML = s.join('');

  // ---------- time axis
  var seps = [95,121,147,183,228,254,290,335,370,396,442,477,504,521,557,601,636,663,707,743,778,823,859,903,938,974,1010,1054,1090,1126,1162,1205,1232,1267,1303,1347,1383,1409,1454,1488,1533,1569,1613];
  var names = ['06','07','08','09','10','11','12','01','02','03','04','05','06','07','08','09','10','11','12','01','02','03','04','05','06','07','08','09','10','11','12','01','02','03','04','05','06','07','08','09','10','11'];
  var html = '<div class="time-cell time-year" style="width:73px">——年</div>';
  names.forEach(function (n, i) {
    html += '<div class="time-cell" style="width:' + (seps[i + 1] - seps[i]) + 'px">' + n + '</div>';
  });
  document.getElementById('time-cells').innerHTML = html;

  // ---------- mini chart (full-page coordinates)
  s = [];
  [[691, '12990'], [722, '11990'], [753, '10990'], [784, '9990'], [815, '8990'], [846, '7990'], [877, '6990']].forEach(function (l) {
    s.push(hline(1668, 1864, l[0] + .5, '#333', 'stroke-dasharray="1 4"'));
    s.push(hline(1864, 1871, l[0] + .5, LINE));
    s.push(hline(1864, 1868, l[0] + 16, LINE));
    s.push(text(1914, l[0] + 4, l[1], 'end'));
  });
  var z4 = function (x, y) { return [1640 + x / 3, 500 + y / 3]; };
  var z5 = function (x, y) { return [1640 + x / 3, 800 + y / 3]; };
  var miniBars = [
    [z5,85,160,230,1],[z5,96,80,170,1],[z5,110,65,150,0],[z5,122,65,190,0],[z5,135,100,180,1],[z5,150,100,165,0],[z5,165,95,130,1],[z5,178,40,110,1],[z5,192,20,100,1],[z5,205,10,70,1],[z5,232,-10,20,0],
    [z4,258,825,900,1],[z4,272,820,880,1],[z4,285,805,855,0],[z4,298,820,870,1],[z4,310,780,830,1],[z4,327,770,810,0],[z4,338,735,800,1],[z4,353,715,790,1],[z4,365,660,720,1],[z4,380,590,660,1],[z4,390,555,640,1],[z4,408,510,590,1],[z4,418,505,575,1],[z4,435,488,620,0],[z4,445,560,625,0],[z4,462,630,720,0],[z4,472,660,730,0],[z4,490,700,815,1],[z4,500,650,705,1],[z4,515,645,710,0],[z4,528,670,750,0],[z4,542,700,770,0],[z4,555,680,715,1],[z4,572,645,700,1],[z4,582,575,660,1],[z4,596,580,650,0],[z4,608,565,650,1],[z4,625,545,580,1]
  ];
  miniBars.forEach(function (b) {
    var a = b[0](b[1], b[2]), e = b[0](b[1], b[3]);
    s.push(vline(a[0], a[1], e[1], b[4] ? '#c84040' : CYAN, 2.2));
  });
  function m(f, a) { var o = []; for (var i = 0; i < a.length; i += 2) o.push(f(a[i], a[i + 1])); return o; }
  s.push(smooth(m(z5, [85,228,180,218,350,185,635,115]), '#1414c0', 1.4));
  s.push(smooth(m(z4, [85,755,250,730,420,680,625,670]), '#c8c8c8', 1.1));
  s.push(smooth(m(z4, [85,760,140,820,220,890]).concat(m(z5, [250,25,320,55,400,60,500,40,610,0,625,-15])), '#50c838', 1.1));
  s.push(smooth(m(z5, [85,255,150,235,200,190,280,100,355,0]).concat(m(z4, [360,870,400,800,460,735,530,690,625,630])), '#c040c0', 1.1));
  s.push(poly(m(z5, [100,225,135,195,170,150,210,80,250,40,285,0]).concat(m(z4, [330,860,370,790,400,700,430,640,470,613,510,620,550,680,590,680,625,650])), '#f0f068', 1.1));
  s.push(poly(m(z5, [85,230,110,180,140,130,165,125,200,60,240,10]).concat(m(z4, [260,880,320,820,350,790,390,650,420,570,445,560,470,620,490,670,540,700,570,690,600,660,625,600])), '#fff', 1.1));
  s.push(hline(1666, 1918, 898.5, LINE));
  // mini volume
  var mv = [[82,415,1],[96,375,1],[110,400,0],[124,403,0],[137,410,1],[150,450,0],[164,408,1],[177,408,1],[191,405,1],[204,440,1],[218,410,1],[231,410,0],[245,452,0],[258,402,1],[272,415,1],[285,425,0],[299,468,1],[312,415,1],[326,428,0],[339,430,1],[353,432,1],[366,415,1],[380,400,1],[394,393,1],[407,392,1],[421,385,1],[434,388,0],[448,435,0],[461,438,0],[475,428,0],[488,445,1],[502,430,1],[515,405,0],[528,440,0],[542,488,0],[556,510,1],[569,460,1],[582,415,1],[596,428,0],[610,393,1],[623,408,1]];
  mv.forEach(function (b) {
    var a = z5(b[0], b[1]), e = z5(b[0], 522);
    s.push(vline(a[0], a[1], e[1], b[2] ? '#c84040' : CYAN, 2.2));
  });
  s.push(poly(m(z5, [85,450,110,437,170,420,220,412,300,425,370,428,430,400,530,415,570,445,600,445,625,430]), '#f0f068', 1));
  s.push(poly(m(z5, [85,452,110,420,150,405,200,425,230,410,300,430,350,432,435,395,480,420,520,430,570,460,600,458,625,435]), '#fff', 1));
  [[926, '50000'], [950, '25000']].forEach(function (l) {
    s.push(hline(1864, 1871, l[0] + .5, LINE));
    s.push(text(1914, l[0] + 4, l[1], 'end'));
  });
  s.push('<rect x="1865.5" y="961.5" width="33" height="13" fill="none" stroke="' + LINE + '"/>');
  s.push(text(1869, 972, 'X100'));
  s.push(vline(1864.5, 621, 978, LINE));
  document.getElementById('chart-mini').innerHTML = s.join('');
})();
```
